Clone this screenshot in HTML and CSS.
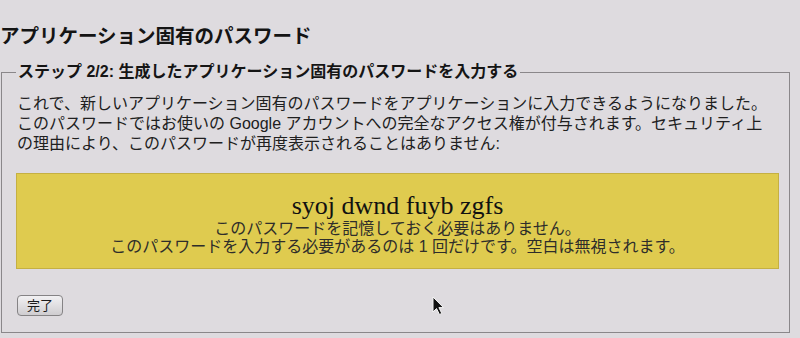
FILE: index.html
```html
<!DOCTYPE html>
<html lang="ja">
<head>
  <meta charset="UTF-8">
  <title>アプリケーション固有のパスワード</title>
  <link rel="stylesheet" href="styles.css">
</head>
<body>

<h1 class="otsikko">アプリケーション固有のパスワード</h1>

<fieldset class="vaihe">
  <legend>ステップ 2/2: 生成したアプリケーション固有のパスワードを入力する</legend>
  <p class="ohje">
    これで、新しいアプリケーション固有のパスワードをアプリケーションに入力できるようになりました。<br>
    このパスワードではお使いの Google アカウントへの完全なアクセス権が付与されます。セキュリティ上<br>
    の理由により、このパスワードが再度表示されることはありません:
  </p>

  <div class="salasana-laatikko">
    <div class="salasana">syoj dwnd fuyb zgfs</div>
    <div class="huom">このパスワードを記憶しておく必要はありません。</div>
    <div class="huom">このパスワードを入力する必要があるのは 1 回だけです。空白は無視されます。</div>
  </div>

  <button type="button" class="valmis">完了</button>
</fieldset>

<!-- hiiren osoitin kuvan päällä -->
<svg class="osoitin" width="13" height="20" viewBox="0 0 13 20">
  <path d="M1 1 L1 16 L4.5 12.5 L7.5 18.5 L9.8 17.4 L6.9 11.6 L11.5 11.6 Z" fill="#111" stroke="#f4f4f4" stroke-width="1"/>
</svg>

</body>
</html>
```

FILE: styles.css
```css
body {
  margin: 0;
  background-color: #dedbdf;
  font-family: "Liberation Sans", "Noto Sans CJK JP", sans-serif;
  color: #1e1e1e;
  position: relative;
  height: 338px;
  overflow: hidden;
}
.otsikko {
  margin: 0;
  padding-top: 24px;
  font-size: 19.5px;
  line-height: 24px;
  font-weight: bold;
  color: #141414;
}
.vaihe {
  margin: 14px 10px 0 1px;
  padding: 12px 10px 16px 15px;
  border: 1px solid #8a878a;
}
.vaihe legend {
  padding: 0 2px;
  margin-left: -1px;
  font-size: 16px;
  line-height: 20px;
  font-weight: bold;
  color: #151515;
}
.ohje {
  margin: 0;
  font-size: 16px;
  line-height: 20px;
  color: #202020;
  white-space: nowrap;
}
.salasana-laatikko {
  margin: 19px 0 0 -1px;
  padding: 18px 0 13px 0;
  background-color: #dfcb4f;
  border: 1px solid #c5b042;
  text-align: center;
}
.salasana {
  font-family: "Liberation Serif", serif;
  font-size: 26px;
  line-height: 28px;
  color: #111;
}
.huom {
  font-size: 16px;
  line-height: 17.5px;
  color: #2e2d2a;
}
.valmis {
  display: block;
  margin-top: 26px;
  width: 46px;
  height: 21px;
  padding: 0;
  font-family: "Liberation Sans", "Noto Sans CJK JP", sans-serif;
  font-size: 13px;
  line-height: 19px;
  color: #1a1a1a;
  background: linear-gradient(#f2f1f3, #cfcdd0);
  border: 1px solid #858385;
  border-radius: 4px;
}
.osoitin {
  position: absolute;
  left: 432px;
  top: 296px;
}
```
